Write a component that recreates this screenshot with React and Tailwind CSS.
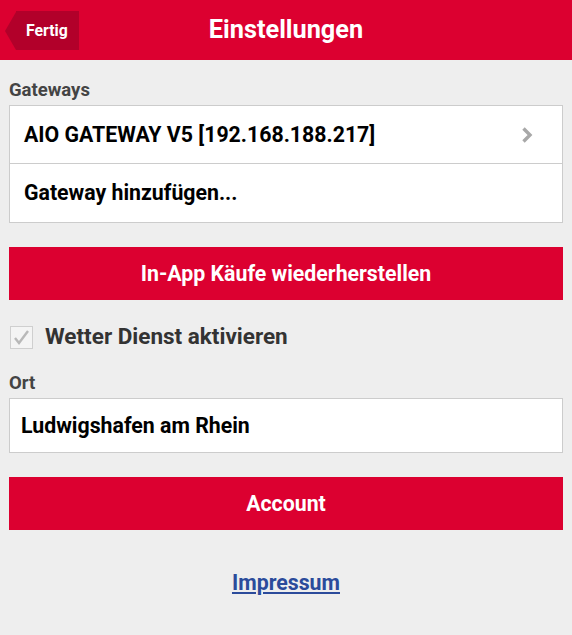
import React from "react";

const RedButton = ({ children }) => (
  <button className="w-full h-[53px] bg-[#dc0030] text-white text-[21.3px] font-bold flex items-center justify-center">
    {children}
  </button>
);

export default function App() {
  return (
    <div className="min-h-[635px] bg-[#eeeeee] font-['Roboto',sans-serif]">
      <header className="relative h-[60px] bg-[#dc0030] flex items-center justify-center">
        <button className="absolute left-[5px] top-[11px] h-[39px] flex items-stretch">
          <span className="w-0 h-0 self-center border-y-[19.5px] border-y-transparent border-r-[11px] border-r-[#b2002a]" />
          <span className="bg-[#b2002a] text-white text-[15.8px] font-bold pl-[10px] pr-[11px] flex items-center">
            Fertig
          </span>
        </button>
        <h1 className="text-white text-[25.3px] font-bold">Einstellungen</h1>
      </header>

      <div className="px-[9px]">
        <div className="text-[#444] text-[18.5px] font-bold pt-[19px] pb-[4px] leading-[22px]">Gateways</div>
        <div className="bg-white border border-[#cccccc]">
          <div className="h-[58px] flex items-center justify-between pl-[14px] pr-[29px] border-b border-[#cccccc]">
            <span className="text-[21.3px] font-bold text-black">AIO GATEWAY V5 [192.168.188.217]</span>
            <svg width="12" height="18" viewBox="0 0 12 18" fill="none">
              <path d="M2.5 2.5L9 9l-6.5 6.5" stroke="#a8a8a8" strokeWidth="3.4" />
            </svg>
          </div>
          <div className="h-[58px] flex items-center pl-[14px]">
            <span className="text-[21.3px] font-bold text-black">Gateway hinzufügen...</span>
          </div>
        </div>

        <div className="mt-[24px]">
          <RedButton>In-App Käufe wiederherstellen</RedButton>
        </div>

        <div className="flex items-center gap-[12px] mt-[20px] pl-[1px] h-[34px]">
          <span className="w-[23px] h-[23px] bg-[#f4f4f4] border border-[#cfcfcf] flex items-center justify-center">
            <svg width="17" height="15" viewBox="0 0 17 15" fill="none">
              <path d="M2 8l4 5L15 1" stroke="#b8b8b8" strokeWidth="2.4" />
            </svg>
          </span>
          <span className="text-[22.5px] font-bold text-[#333]">Wetter Dienst aktivieren</span>
        </div>

        <div className="text-[#444] text-[18.5px] font-bold mt-[18px] mb-[4px] leading-[22px]">Ort</div>
        <div className="bg-white border border-[#cccccc] h-[55px] flex items-center pl-[11px]">
          <span className="text-[21.3px] font-bold text-black">Ludwigshafen am Rhein</span>
        </div>

        <div className="mt-[24px]">
          <RedButton>Account</RedButton>
        </div>

        <div className="flex justify-center mt-[38px] leading-[30px]">
          <a href="#" className="text-[#2b4b9b] text-[21.3px] font-bold underline">Impressum</a>
        </div>
      </div>
    </div>
  );
}
